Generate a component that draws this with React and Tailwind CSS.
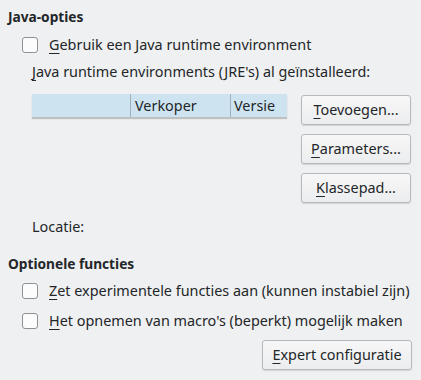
export default function App() {
  const font = { fontFamily: '"Noto Sans", "Open Sans", sans-serif' };
  const U = ({ children }) => (
    <span className="underline decoration-[1px] underline-offset-[3px]">{children}</span>
  );
  const Check = () => (
    <div className="w-[16px] h-[16px] rounded-[3px] border border-[#8e9194] bg-[#fcfcfc] shrink-0" />
  );
  const Btn = ({ children, w, className = "" }) => (
    <div
      className={`h-[30px] rounded-[3px] border border-[#b6b8ba] bg-gradient-to-b from-[#f7f7f8] to-[#ecedee] shadow-[0_1px_1px_rgba(0,0,0,0.12)] flex items-center justify-center text-[14.4px] leading-[18px] text-[#232629] ${w} ${className}`}
    >
      {children}
    </div>
  );
  return (
    <div
      style={font}
      className="w-[421px] h-[380px] bg-[#eff0f1] text-[#232629] text-[14.4px] pt-[8px] pl-[8px] pr-[9px] flex flex-col overflow-hidden"
    >
      <div className="h-[18px] leading-[18px] font-bold text-[13.7px]">Java-opties</div>
      <div className="mt-[11px] h-[16px] flex items-center pl-[14px] gap-[11px]">
        <Check />
        <span className="leading-[18px]">
          <U>G</U>ebruik een Java runtime environment
        </span>
      </div>
      <div className="mt-[10px] h-[18px] leading-[18px] pl-[24px]">
        <U>J</U>ava runtime environments (JRE's) al geïnstalleerd:
      </div>
      <div className="mt-[13px] flex pl-[24px]">
        <div className="w-[255px]">
          <div className="h-[23px] flex bg-[#cde3ef] shadow-[0_2px_1px_rgba(0,0,0,0.2)] text-[14.4px] leading-[18px]">
            <div className="w-[99px] border-r border-[#9fb2bd]" />
            <div className="w-[100px] border-r border-[#9fb2bd] pl-[4px] flex items-center">Verkoper</div>
            <div className="flex-1 pl-[3px] flex items-center">Versie</div>
          </div>
        </div>
        <div className="ml-[14px] mt-[1px] flex flex-col gap-[9px]">
          <Btn w="w-[110px]"><span><U>T</U>oevoegen...</span></Btn>
          <Btn w="w-[110px]"><span><U>P</U>arameters...</span></Btn>
          <Btn w="w-[110px]"><span><U>K</U>lassepad...</span></Btn>
        </div>
      </div>
      <div className="mt-[15px] h-[18px] leading-[18px] pl-[24px]">Locatie:</div>
      <div className="mt-[19px] h-[18px] leading-[18px] font-bold text-[13.7px]">Optionele functies</div>
      <div className="mt-[10px] h-[16px] flex items-center pl-[14px] gap-[11px]">
        <Check />
        <span className="leading-[18px]">
          <U>Z</U>et experimentele functies aan (kunnen instabiel zijn)
        </span>
      </div>
      <div className="mt-[14px] h-[16px] flex items-center pl-[14px] gap-[11px]">
        <Check />
        <span className="leading-[18px]">
          <U>H</U>et opnemen van macro's (beperkt) mogelijk maken
        </span>
      </div>
      <div className="mt-[11px] flex justify-end">
        <Btn w="w-[150px]"><span><U>E</U>xpert configuratie</span></Btn>
      </div>
    </div>
  );
}
